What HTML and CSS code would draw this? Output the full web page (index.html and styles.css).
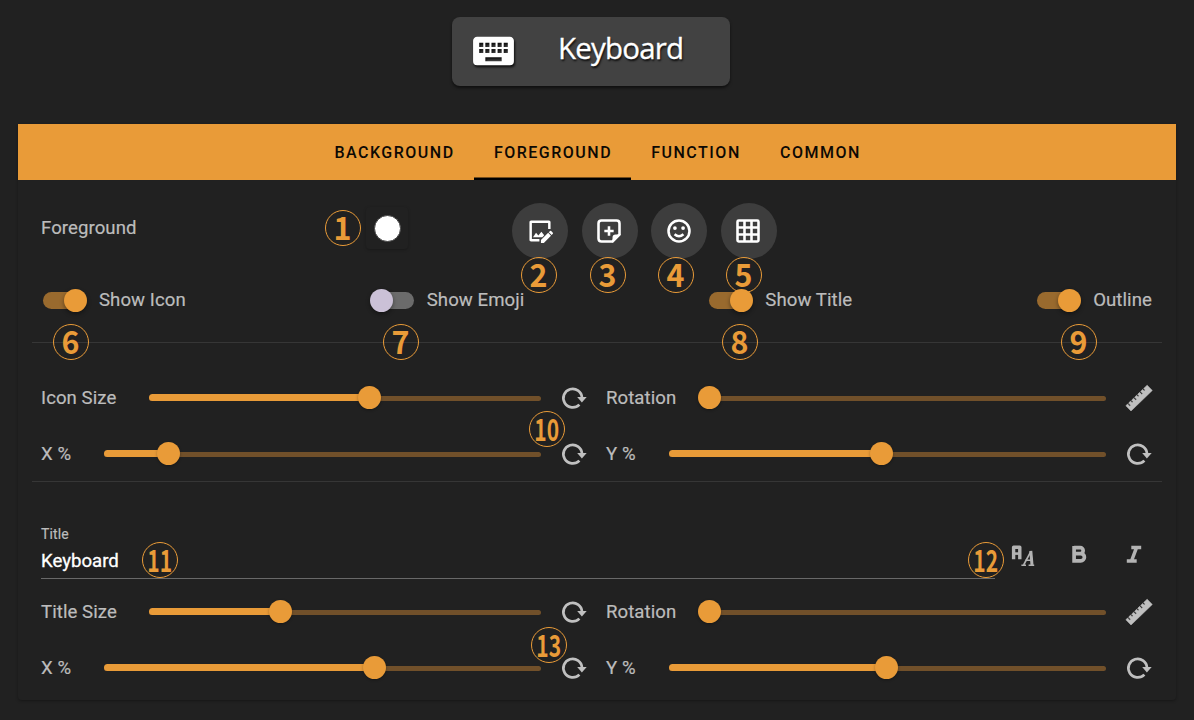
FILE: index.html
```html
<!DOCTYPE html>
<html lang="en">
<head>
<meta charset="utf-8">
<title>Keyboard</title>
<link rel="stylesheet" href="styles.css">
</head>
<body>
<svg class="defs" aria-hidden="true">
  <symbol id="reload" viewBox="0 0 28 28">
    <path d="M19.4 20.6A9.3 9.3 0 1 1 22 13.8" fill="none" stroke="currentColor" stroke-width="2.7"/>
    <path d="M17.2 13.1H26.7L21.9 18.4Z" fill="currentColor"/>
  </symbol>
  <symbol id="ruler" viewBox="0 0 28 28">
    <g transform="rotate(-44 14 14)"><path d="M-.8 10.4H1.6V13.4H3V10.4H5.8V12.6H7.2V10.4H10V13.4H11.4V10.4H14.2V12.6H15.6V10.4H18.4V13.4H19.8V10.4H22.6V12.6H24V10.4H28.8V17.8H-.8Z" fill="currentColor" stroke="currentColor" stroke-width=".5" stroke-linejoin="round"/></g>
  </symbol>
</svg>
<main class="page">
  <div class="preview">
    <svg class="preview-icon" viewBox="0 0 24 24"><path fill="#fff" d="M19,10H17V8H19M19,13H17V11H19M16,10H14V8H16M16,13H14V11H16M16,17H8V15H16M7,10H5V8H7M7,13H5V11H7M8,11H10V13H8M8,8H10V10H8M11,11H13V13H11M11,8H13V10H11M20,5H4C2.89,5 2,5.89 2,7V17A2,2 0 0,0 4,19H20A2,2 0 0,0 22,17V7C22,5.89 21.1,5 20,5Z"/></svg>
    <span class="preview-title">Keyboard</span>
  </div>

  <section class="panel">
    <nav class="tabs">
      <div class="tab tab-bg">BACKGROUND</div>
      <div class="tab tab-fg active">FOREGROUND</div>
      <div class="tab tab-fn">FUNCTION</div>
      <div class="tab tab-co">COMMON</div>
    </nav>

    <div class="actions">
      <span class="label actions-label">Foreground</span>
      <span class="swatch"><i class="swatch-dot"></i></span>
      <div class="buttons">
        <button class="round"><svg viewBox="0 0 24 24" fill="none" stroke="#fff" stroke-width="2.1"><path d="M11.5 20H4.3Q4 20 4 19.7V4.3Q4 4 4.3 4H19.7Q20 4 20 4.3V10.3"/><path fill="#fff" stroke="none" d="M6 17.3L8.6 13.5L10.6 15.8L13.2 12.6L15.6 15.6L14 17.3ZM12.8 19.7V22.2H15.3L21.4 16.1L19 13.6ZM23 14.4L22 15.5L19.5 13L20.6 12Q21.1 11.6 21.6 12L23 13.4Q23.4 13.9 23 14.4Z"/></svg></button>
        <button class="round"><svg viewBox="0 0 24 24" fill="none" stroke="#fff" stroke-width="2.2"><path d="M15 21H5.5Q3 21 3 18.5V5.5Q3 3 5.5 3H18.5Q21 3 21 5.5V15Z"/><path d="M15.5 21V17.8Q15.5 15.5 17.8 15.5H21Z" fill="#fff" stroke-width="1"/><path d="M12 8V16M8 12H16"/></svg></button>
        <button class="round"><svg viewBox="0 0 24 24" fill="none" stroke="#fff" stroke-width="2.2"><circle cx="12" cy="12" r="9"/><circle cx="8.5" cy="9.5" r="1.6" fill="#fff" stroke="none"/><circle cx="15.5" cy="9.5" r="1.6" fill="#fff" stroke="none"/><path d="M8.2 14.8Q12 18.2 15.8 14.8"/></svg></button>
        <button class="round"><svg viewBox="0 0 24 24" fill="none" stroke="#fff" stroke-width="2.2"><rect x="3" y="3" width="18" height="18" rx="1"/><path d="M9 3V21M15 3V21M3 9H21M3 15H21"/></svg></button>
      </div>
    </div>

    <div class="switches">
      <div class="switch on"><i class="switch-track"><b class="knob"></b></i><span class="label">Show Icon</span></div>
      <div class="switch"><i class="switch-track"><b class="knob"></b></i><span class="label">Show Emoji</span></div>
      <div class="switch on"><i class="switch-track"><b class="knob"></b></i><span class="label">Show Title</span></div>
      <div class="switch on"><i class="switch-track"><b class="knob"></b></i><span class="label">Outline</span></div>
    </div>
    <hr class="rule">

    <div class="sliders">
      <div class="control wide"><span class="label">Icon Size</span><div class="slider" style="--v:220px"><i class="fill"></i><b class="thumb"></b></div><svg class="icon"><use href="#reload"/></svg></div>
      <div class="control rotation"><span class="label">Rotation</span><div class="slider" style="--v:3px"><i class="fill"></i><b class="thumb"></b></div><svg class="icon"><use href="#ruler"/></svg></div>
      <div class="control"><span class="label">X %</span><div class="slider" style="--v:65px"><i class="fill"></i><b class="thumb"></b></div><svg class="icon"><use href="#reload"/></svg></div>
      <div class="control"><span class="label">Y %</span><div class="slider" style="--v:213px"><i class="fill"></i><b class="thumb"></b></div><svg class="icon"><use href="#reload"/></svg></div>
    </div>
    <hr class="rule rule-second">

    <div class="title-row">
      <div class="field"><span class="field-name">Title</span><span class="field-value">Keyboard</span></div>
      <div class="formats">
        <svg class="format" viewBox="0 0 28 28" fill="none" stroke="currentColor"><path d="M4.6 18.3V6.2H10.8V18.3" stroke-width="3.4" stroke-linejoin="round"/><path d="M4 12.6H12" stroke-width="2.6"/><path d="M14.6 24L21.6 11" stroke-width="1.6"/><path d="M21.8 9.8L23 24" stroke-width="3"/><path d="M16.5 19.2H23M12.4 24.3H17M19.6 24.3H25.2" stroke-width="1.6"/></svg>
        <svg class="format" viewBox="0 0 28 28" fill="none" stroke="currentColor" stroke-width="3.7"><path d="M9.1 6.7H15.2A2.9 2.9 0 0 1 15.2 12.6H9.1M9.1 12.6H15.8A3.5 3.5 0 0 1 15.8 19.8H9.1V4.9"/></svg>
        <svg class="format" viewBox="0 0 28 28" fill="none" stroke="currentColor" stroke-width="3.5"><path d="M11.3 6.6H21.2M6.8 20H16.7M11.5 20L16.5 6.6"/></svg>
      </div>
    </div>

    <div class="sliders">
      <div class="control wide"><span class="label">Title Size</span><div class="slider" style="--v:131px"><i class="fill"></i><b class="thumb"></b></div><svg class="icon"><use href="#reload"/></svg></div>
      <div class="control rotation"><span class="label">Rotation</span><div class="slider" style="--v:3px"><i class="fill"></i><b class="thumb"></b></div><svg class="icon"><use href="#ruler"/></svg></div>
      <div class="control"><span class="label">X %</span><div class="slider" style="--v:271px"><i class="fill"></i><b class="thumb"></b></div><svg class="icon"><use href="#reload"/></svg></div>
      <div class="control"><span class="label">Y %</span><div class="slider" style="--v:218px"><i class="fill"></i><b class="thumb"></b></div><svg class="icon"><use href="#reload"/></svg></div>
    </div>
  </section>

  <div class="pin" style="left:324.5px;top:210px"><span>1</span></div>
  <div class="pin" style="left:520.5px;top:257px"><span>2</span></div>
  <div class="pin" style="left:589.5px;top:257px"><span>3</span></div>
  <div class="pin" style="left:657.5px;top:257px"><span>4</span></div>
  <div class="pin" style="left:725.5px;top:257px"><span>5</span></div>
  <div class="pin" style="left:52.5px;top:324px"><span>6</span></div>
  <div class="pin" style="left:382.5px;top:324px"><span>7</span></div>
  <div class="pin" style="left:721.5px;top:324px"><span>8</span></div>
  <div class="pin" style="left:1060.5px;top:324px"><span>9</span></div>
  <div class="pin double" style="left:528.5px;top:411px"><span>10</span></div>
  <div class="pin double" style="left:141.5px;top:542px"><span>11</span></div>
  <div class="pin double" style="left:967.5px;top:542px"><span>12</span></div>
  <div class="pin double" style="left:530.5px;top:627px"><span>13</span></div>
</main>
</body>
</html>
```
FILE: styles.css
```css
* { box-sizing: border-box; }
body { margin: 0; background: #212121; font-family: Roboto, "Liberation Sans", sans-serif; }
.defs { display: none; }
.page { position: relative; width: 1194px; height: 720px; overflow: hidden; padding: 17px 18px 0; }

.preview { width: 278px; height: 69px; margin-left: 434px; display: flex; align-items: center; padding-left: 17px; border-radius: 8px; background: #424242; box-shadow: 0 2px 3px rgba(0,0,0,.55); }
.preview-icon { width: 49px; height: 50px; flex: none; margin-bottom: 1px; filter: drop-shadow(1px 2px 1px rgba(0,0,0,.8)); }
.preview-title { margin: -7px 0 0 40px; font: 29.5px/40px "Open Sans", sans-serif; letter-spacing: -.8px; color: #fff; -webkit-text-stroke: .3px #fff; text-shadow: 1px 2px 2px rgba(0,0,0,.8); }

.panel { width: 1158px; height: 576px; margin-top: 38px; border-radius: 4px; box-shadow: 0 1px 3px rgba(0,0,0,.35); }
.tabs { height: 56px; display: flex; justify-content: center; background: #e99b38; }
.tab { display: flex; align-items: center; justify-content: center; padding: 1px 0 0 1px; font-size: 16px; font-weight: 500; letter-spacing: 1.5px; color: #0d0904; }
.tab.active { box-shadow: inset 0 -2.5px #000; }
.tab-bg { width: 160px; }
.tab-fg { width: 157px; }
.tab-fn { width: 129px; }
.tab-co { width: 120px; }

.label { font-size: 18.6px; letter-spacing: .07px; color: #bcbcbc; -webkit-text-stroke: .2px #bcbcbc; white-space: nowrap; }
.actions { height: 94px; display: flex; padding: 23px 0 0 23px; }
.actions-label { width: 325px; padding-top: 14px; line-height: 22px; }
.swatch { width: 42px; height: 42px; margin-top: 4px; display: grid; place-items: center; border-radius: 4px; box-shadow: 0 1px 3px rgba(0,0,0,.25); }
.swatch-dot { width: 27px; height: 27px; border-radius: 50%; background: #fff; border: 1.5px solid #444; }
.buttons { display: flex; gap: 13.5px; margin-left: 104px; }
.round { width: 56px; height: 56px; padding: 0; border: 0; border-radius: 50%; display: grid; place-items: center; background: #3d3d3d; }
.round svg { width: 28px; height: 28px; margin: -1px 0 0 -1px; }

.switches { height: 52px; display: flex; align-items: center; justify-content: space-between; padding: 0 24px 0 25px; }
.switch { display: flex; align-items: center; gap: 13px; }
.switch-track { width: 43px; height: 17px; display: flex; align-items: center; border-radius: 9px; background: #6b6b6b; }
.knob { flex: none; width: 23px; height: 23px; margin-left: -1px; border-radius: 50%; background: #cbc1d7; box-shadow: 0 2px 4px rgba(0,0,0,.4); }
.on .switch-track { background: #996a2e; justify-content: flex-end; }
.on .knob { margin: 0 -1px 0 0; background: #e99b38; }
.rule { height: 1px; margin: 16px 14px 0; border: 0; background: #363636; }
.rule-second { margin-top: -1px; }

.sliders { display: grid; grid-template-columns: 565px 565px; padding-left: 23px; }
.rule + .sliders { padding-top: 27px; }
.control { height: 56px; display: grid; grid-template-columns: 62.5px 437.5px 28px; align-items: center; }
.control .icon { width: 28px; height: 28px; margin: -1px 0 0 19px; color: #c0c0c0; }
.control.wide { grid-template-columns: 108px 392px 28px; }
.control.rotation { grid-template-columns: 100px 400px 28px; }
.slider { position: relative; height: 24px; margin-top: -1px; display: flex; align-items: center; }
.slider::before { content: ""; position: absolute; z-index: -1; inset: 10px 0 9px; border-radius: 3px; background: #71502a; }
.fill { width: var(--v); height: 7px; flex: none; border-radius: 4px 0 0 4px; background: #e99b38; }
.thumb { width: 23px; height: 23px; flex: none; margin-left: -11.5px; border-radius: 50%; background: #e99b38; box-shadow: 0 1px 3px rgba(0,0,0,.3); }
.rotation .fill { visibility: hidden; }
.rotation .slider::before { left: 4px; }

.title-row { height: 102px; display: flex; padding-left: 23px; }
.field { width: 954px; height: 97px; padding-top: 43px; display: flex; flex-direction: column; border-bottom: 1px solid #696969; }
.field-name { font-size: 14px; line-height: 18px; letter-spacing: .1px; color: #bcbcbc; -webkit-text-stroke: .2px #bcbcbc; }
.field-value { margin-top: 7px; font-size: 18.6px; line-height: 22px; letter-spacing: 0; color: #fff; -webkit-text-stroke: .3px #fff; }
.formats { display: flex; gap: 27.5px; margin: 59px 0 0 14px; }
.format { width: 28px; height: 28px; color: #b3b3b3; }

.pin { position: absolute; width: 36px; height: 36px; display: grid; place-items: center; border: 1.5px solid #e99b38; border-radius: 50%; color: #e99b38; font: bold 32px/34px "Noto Sans CJK JP", sans-serif; }
.pin span { transform: translateY(-2px) scaleX(.95); }
.pin.double span { font-size: 30px; transform: translateY(-1.5px) scaleX(.7); margin: 0 -10px; }
```
